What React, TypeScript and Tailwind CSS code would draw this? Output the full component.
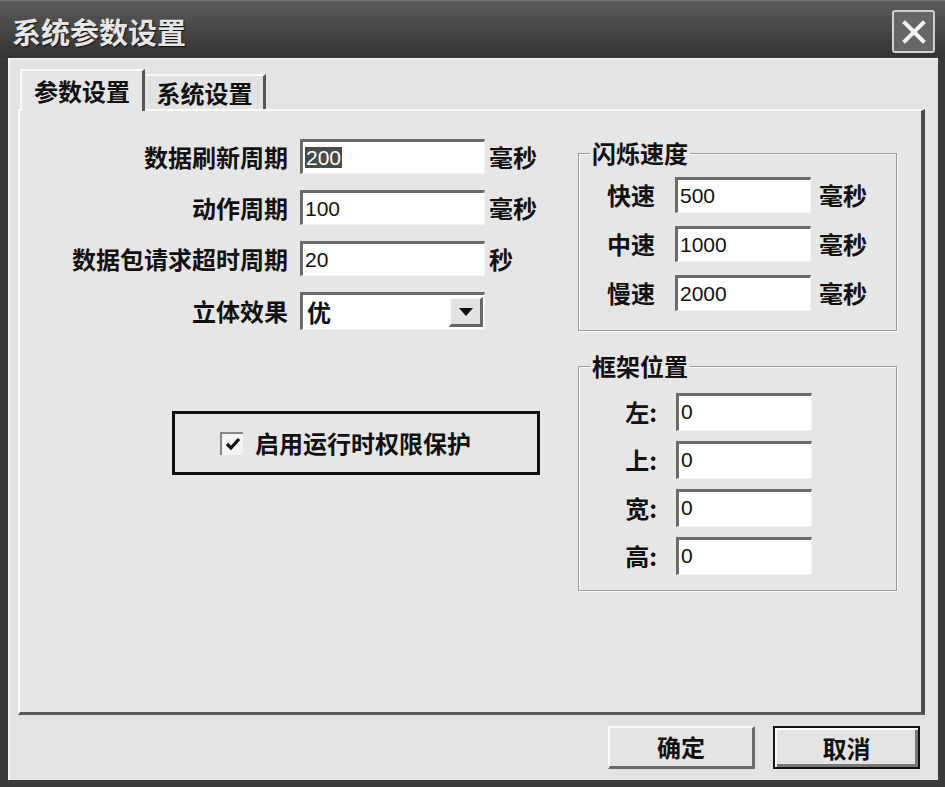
import { HTMLAttributes } from "react";

const cjk = "font-['Noto_Sans_CJK_SC',sans-serif]";
const num = "font-['Liberation_Sans',sans-serif]";

const leftRows = [
  { label: "数据刷新周期", value: "200", unit: "毫秒", selected: true },
  { label: "动作周期", value: "100", unit: "毫秒" },
  { label: "数据包请求超时周期", value: "20", unit: "秒" },
];

const speedRows = [
  { label: "快速", value: "500" },
  { label: "中速", value: "1000" },
  { label: "慢速", value: "2000" },
];

const frameRows = [
  { label: "左:", value: "0" },
  { label: "上:", value: "0" },
  { label: "宽:", value: "0" },
  { label: "高:", value: "0" },
];

type FieldProps = {
  value: string;
  selected?: boolean;
  className?: string;
};

function Field({ value, selected, className = "" }: FieldProps) {
  return (
    <div
      className={`flex items-start border-t-[3px] border-l-[3px] border-r border-b border-t-[#6a6a6a] border-l-[#6a6a6a] border-r-[#f4f4f4] border-b-[#f4f4f4] bg-white pl-[2px] pt-[5px] text-[21px] leading-none text-[#111] ${num} ${className}`}
    >
      {selected ? (
        <span className="bg-[#4a4a4a] px-[1px] text-white">{value}</span>
      ) : (
        <span>{value}</span>
      )}
    </div>
  );
}

function GroupBox({
  title,
  className = "",
  children,
}: HTMLAttributes<HTMLFieldSetElement> & { title: string }) {
  return (
    <fieldset
      className={`border border-[#9a9a9a] shadow-[inset_1px_1px_0_#fafafa,1px_1px_0_#fafafa] ${className}`}
    >
      <legend className="ml-[11px] px-[2px] text-[24px] leading-[26px] font-semibold text-[#111]">
        {title}
      </legend>
      {children}
    </fieldset>
  );
}

function Button({ label, primary }: { label: string; primary?: boolean }) {
  return (
    <button
      className={`flex h-[43px] w-[147px] items-center justify-center bg-[#e4e4e4] text-[24px] font-semibold text-[#111] ${
        primary
          ? "border-2 border-[#111] shadow-[inset_2px_2px_0_#fff,inset_-3px_-3px_0_#777]"
          : "border-t-2 border-l-2 border-b-[3px] border-r-[3px] border-t-[#fafafa] border-l-[#fafafa] border-b-[#6a6a6a] border-r-[#6a6a6a]"
      }`}
    >
      {label}
    </button>
  );
}

export default function App() {
  return (
    <div
      className={`flex h-[787px] w-[945px] flex-col overflow-hidden bg-[#3a3a3a] ${cjk}`}
    >
      {/* title bar */}
      <div className="flex h-[58px] shrink-0 items-start justify-between border-t border-[#777] bg-gradient-to-b from-[#5a5a5a] via-[#474747] to-[#333] pl-[12px] pr-[10px]">
        <h1 className="mt-[12px] text-[29px] leading-[36px] font-semibold text-[#e6e6e6] [text-shadow:1px_1px_1px_#111]">
          系统参数设置
        </h1>
        <div className="mt-[9px] flex h-[43px] w-[43px] items-center justify-center rounded-[3px] border-2 border-[#cfcfcf] bg-[#666]">
          <svg width="26" height="26" viewBox="0 0 26 26">
            <path
              d="M4 4 L22 22 M22 4 L4 22"
              stroke="#f2f2f2"
              strokeWidth="4"
              strokeLinecap="square"
            />
          </svg>
        </div>
      </div>

      {/* body */}
      <div className="mb-[7px] ml-[8px] mr-[7px] flex flex-1 flex-col border-l-2 border-t border-[#f6f6f6] bg-[#e3e3e3] pl-[8px] pr-[13px] pt-[10px]">
        {/* tabs */}
        <div className="relative z-10 flex h-[40px] items-end">
          <div className="ml-[2px] flex h-[42px] w-[125px] translate-y-[2px] items-center justify-center border-l-2 border-t-2 border-r-[3px] border-l-[#fafafa] border-t-[#fafafa] border-r-[#555] bg-[#e6e6e6] text-[24px] font-semibold text-[#111]">
            参数设置
          </div>
          <div className="ml-[1px] flex h-[35px] w-[120px] items-center justify-center border-t-2 border-r-[3px] border-t-[#fafafa] border-r-[#555] text-[24px] font-semibold text-[#111]">
            系统设置
          </div>
        </div>

        {/* tab panel */}
        <div className="flex h-[606px] border-l-2 border-t-2 border-r-[4px] border-b-[3px] border-l-[#fafafa] border-t-[#fafafa] border-r-[#4a4a4a] border-b-[#5a5a5a] bg-[#e6e6e6]">
          {/* left column */}
          <div className="flex w-[540px] flex-col pt-[28px]">
            <div className="flex flex-col gap-[16px]">
              {leftRows.map((row) => (
                <div key={row.label} className="flex h-[35px] items-center">
                  <span className="w-[268px] text-right text-[24px] font-semibold text-[#111]">
                    {row.label}
                  </span>
                  <Field
                    value={row.value}
                    selected={row.selected}
                    className="ml-[12px] h-[35px] w-[185px]"
                  />
                  <span className="ml-[4px] text-[24px] font-semibold text-[#111]">
                    {row.unit}
                  </span>
                </div>
              ))}
              <div className="flex h-[38px] items-center">
                <span className="w-[268px] text-right text-[24px] font-semibold text-[#111]">
                  立体效果
                </span>
                <div className="ml-[12px] flex h-[38px] w-[185px] items-center border-t-[3px] border-l-[3px] border-r border-b border-t-[#6a6a6a] border-l-[#6a6a6a] border-r-[#f4f4f4] border-b-[#f4f4f4] bg-white pl-[4px]">
                  <span className="flex-1 text-[24px] leading-none font-semibold text-[#111]">
                    优
                  </span>
                  <div className="mr-[1px] flex h-[30px] w-[34px] items-center justify-center border-t-2 border-l-2 border-b-[3px] border-r-[3px] border-t-[#fafafa] border-l-[#fafafa] border-b-[#666] border-r-[#666] bg-[#e2e2e2]">
                    <svg width="14" height="8" viewBox="0 0 14 8">
                      <path d="M0 0 H14 L7 8 Z" fill="#111" />
                    </svg>
                  </div>
                </div>
              </div>
            </div>

            <div className="ml-[152px] mt-[81px] flex h-[64px] w-[368px] items-center border-[3px] border-[#111] pl-[45px]">
              <div className="flex h-[23px] w-[23px] items-center justify-center border-t-2 border-l-2 border-t-[#888] border-l-[#888] bg-[#f4f4f4]">
                <svg width="16" height="14" viewBox="0 0 16 14">
                  <path
                    d="M2 7 L6 11 L14 2"
                    fill="none"
                    stroke="#111"
                    strokeWidth="3.2"
                  />
                </svg>
              </div>
              <span className="ml-[12px] text-[24px] font-semibold text-[#111]">
                启用运行时权限保护
              </span>
            </div>
          </div>

          {/* right column */}
          <div className="flex flex-col pl-[18px] pt-[29px]">
            <GroupBox title="闪烁速度" className="h-[191px] w-[319px]">
              <div className="flex flex-col gap-[13px] pl-[28px] pt-[11px]">
                {speedRows.map((row) => (
                  <div key={row.label} className="flex h-[36px] items-center">
                    <span className="w-[48px] text-[24px] font-semibold text-[#111]">
                      {row.label}
                    </span>
                    <Field value={row.value} className="ml-[20px] h-[36px] w-[136px]" />
                    <span className="ml-[8px] text-[24px] font-semibold text-[#111]">
                      毫秒
                    </span>
                  </div>
                ))}
              </div>
            </GroupBox>

            <GroupBox title="框架位置" className="mt-[22px] h-[238px] w-[319px]">
              <div className="flex flex-col gap-[10px] pl-[28px] pt-[14px]">
                {frameRows.map((row) => (
                  <div key={row.label} className="flex h-[38px] items-center">
                    <span className="w-[50px] text-right text-[24px] font-semibold text-[#111]">
                      {row.label}
                    </span>
                    <Field value={row.value} className="ml-[19px] h-[38px] w-[136px]" />
                  </div>
                ))}
              </div>
            </GroupBox>
          </div>
        </div>

        {/* buttons */}
        <div className="mt-[11px] flex justify-end gap-[18px] pr-[5px]">
          <Button label="确定" />
          <Button label="取消" primary />
        </div>
      </div>
    </div>
  );
}
